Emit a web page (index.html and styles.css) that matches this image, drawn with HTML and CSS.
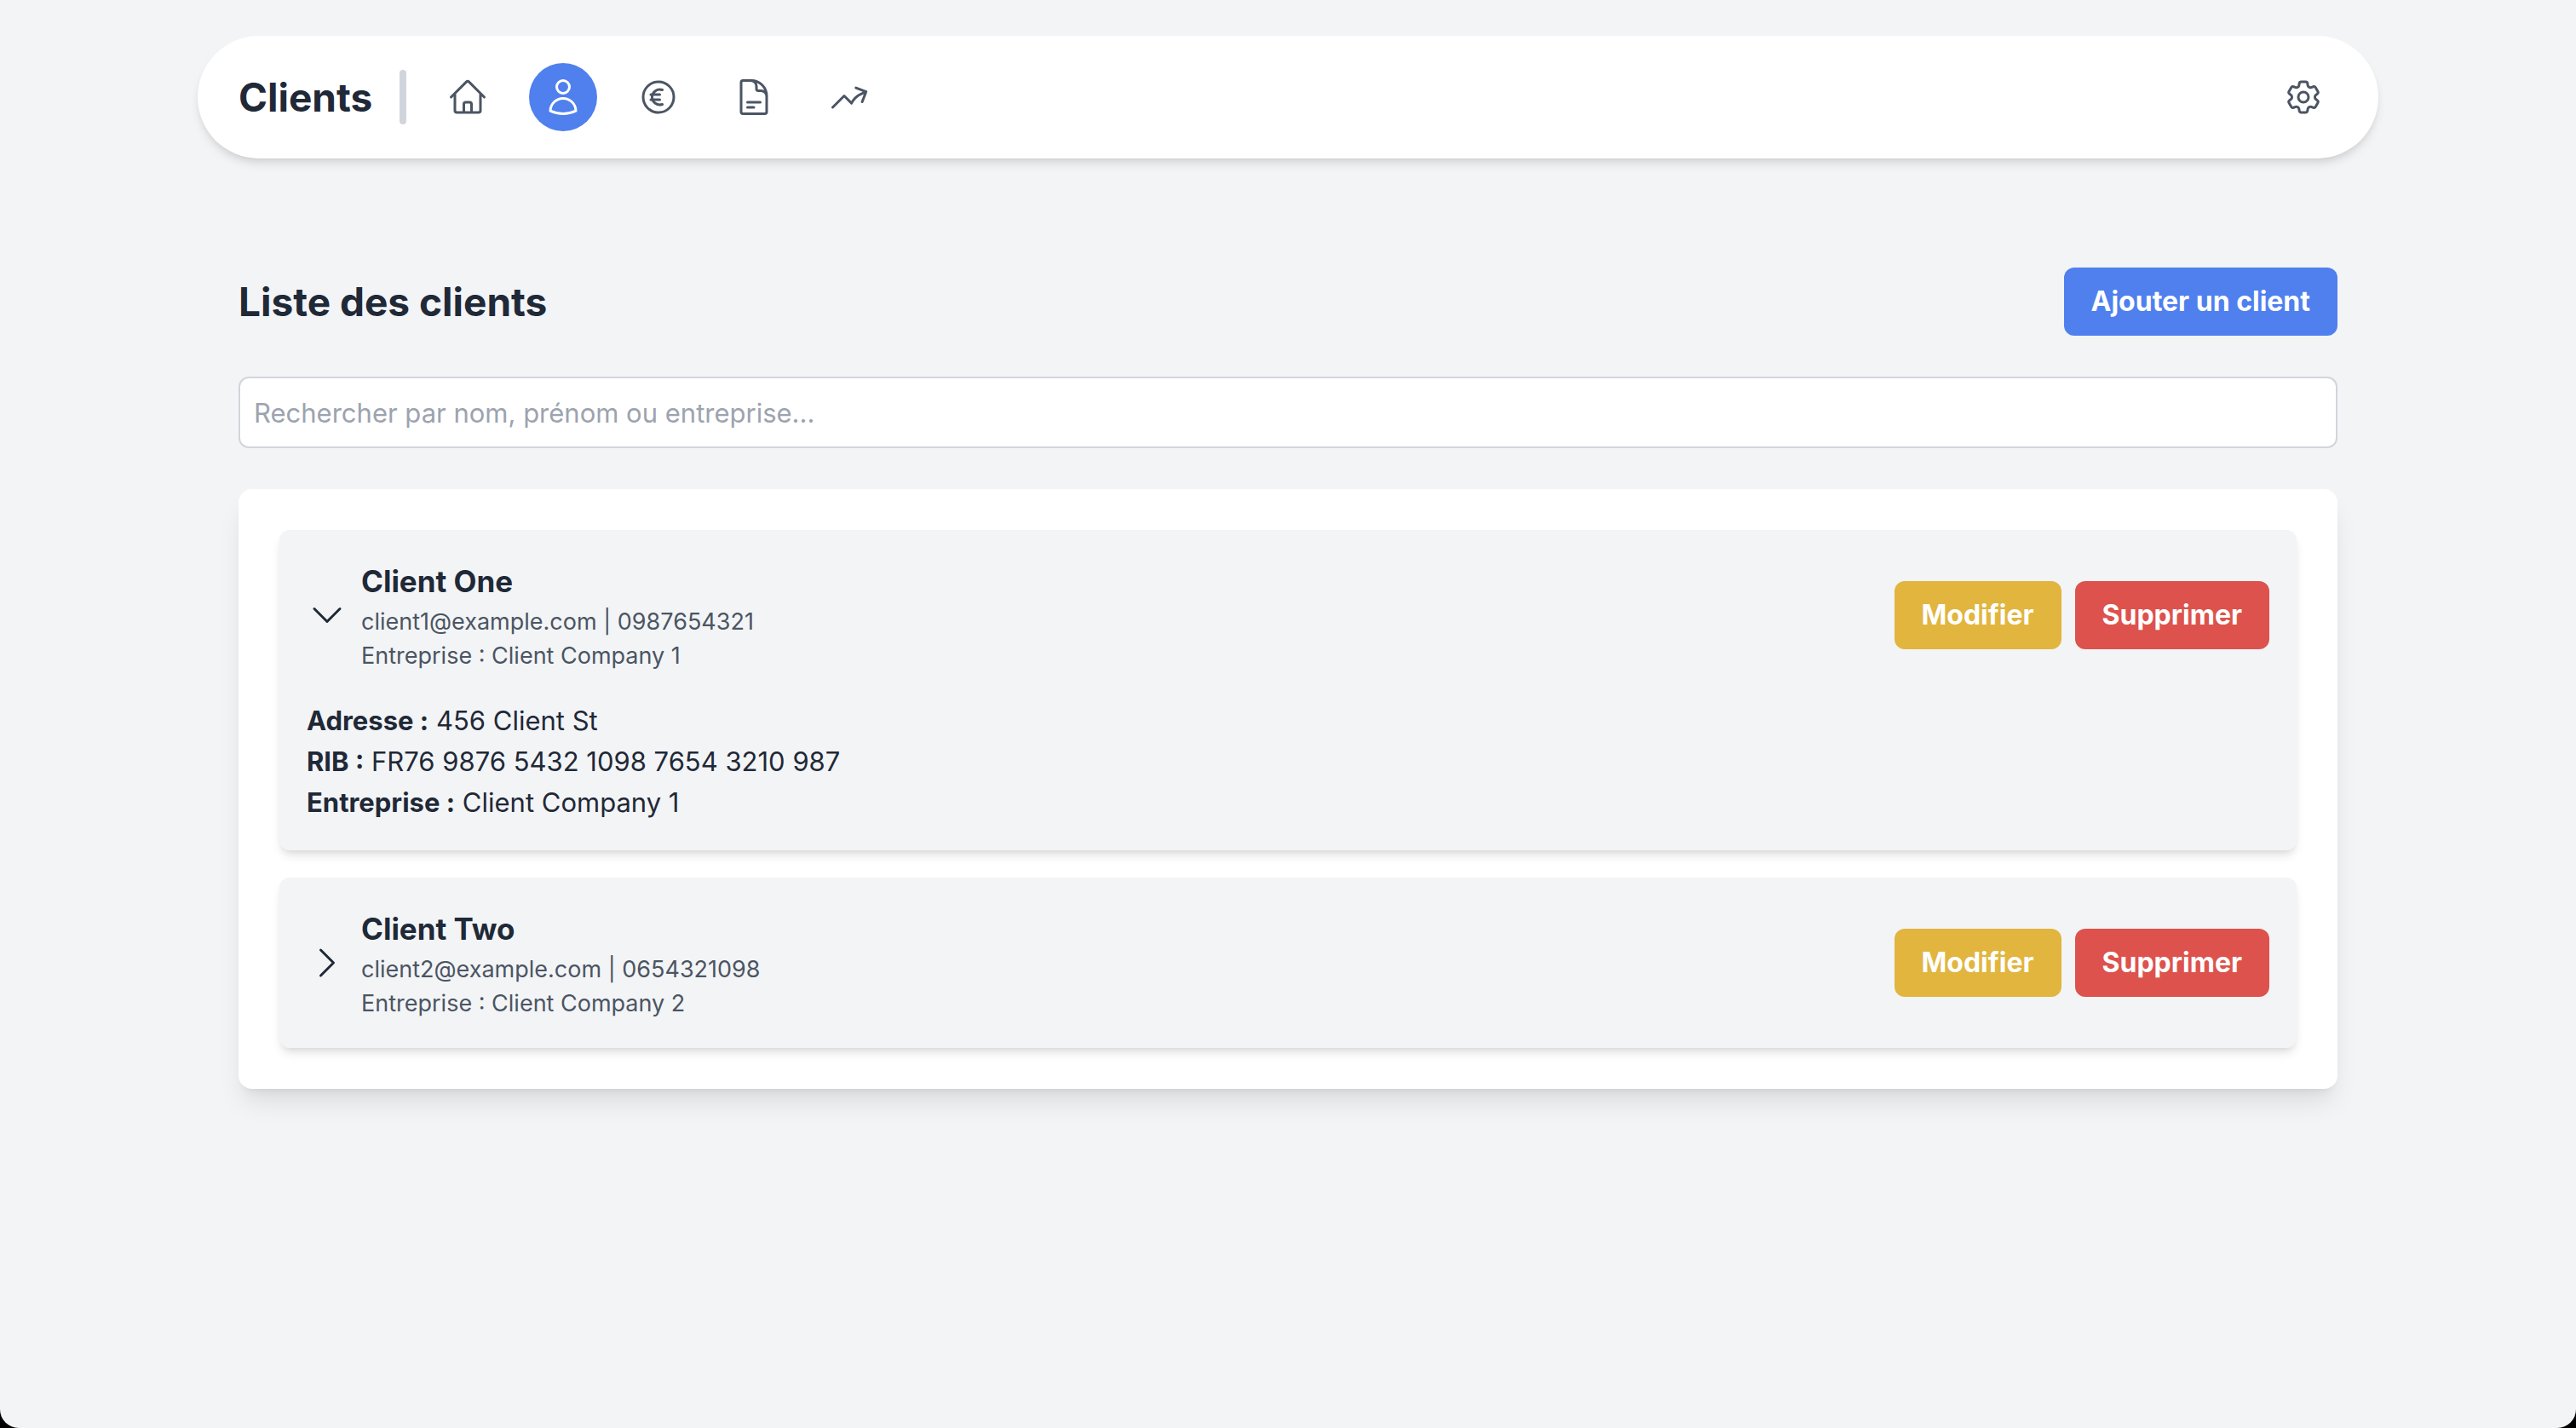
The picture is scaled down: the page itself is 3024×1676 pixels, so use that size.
FILE: index.html
```html
<!DOCTYPE html>
<html lang="fr">
<head>
  <meta charset="utf-8">
  <meta name="viewport" content="width=device-width, initial-scale=1">
  <title>Clients</title>
  <link rel="stylesheet" href="styles.css">
</head>
<body>
  <div class="page">
    <header class="topbar">
      <h1 class="topbar-title">Clients</h1>
      <span class="divider"></span>
      <nav class="nav" aria-label="Navigation principale">
        <a class="nav-link" href="#accueil" aria-label="Accueil">
          <svg class="icon" viewBox="0 0 24 24"><path d="M2.25 12l8.954-8.955c.44-.439 1.152-.439 1.591 0L21.75 12M4.5 9.75v10.125c0 .621.504 1.125 1.125 1.125H9.75v-4.875c0-.621.504-1.125 1.125-1.125h2.25c.621 0 1.125.504 1.125 1.125V21h4.125c.621 0 1.125-.504 1.125-1.125V9.75M8.25 21h8.25"/></svg>
        </a>
        <a class="nav-link nav-link-active" href="#clients" aria-label="Clients" aria-current="page">
          <svg class="icon" viewBox="0 0 24 24"><path d="M15.75 6a3.75 3.75 0 11-7.5 0 3.75 3.75 0 017.5 0zM4.501 20.118a7.5 7.5 0 0114.998 0A17.933 17.933 0 0112 21.75c-2.676 0-5.216-.584-7.499-1.632z"/></svg>
        </a>
        <a class="nav-link" href="#paiements" aria-label="Paiements">
          <svg class="icon" viewBox="0 0 24 24"><path d="M14.25 7.756a4.5 4.5 0 100 8.488M7.5 10.5h5.25m-5.25 3h5.25M21 12a9 9 0 11-18 0 9 9 0 0118 0z"/></svg>
        </a>
        <a class="nav-link" href="#documents" aria-label="Documents">
          <svg class="icon" viewBox="0 0 24 24"><path d="M19.5 14.25v-2.625a3.375 3.375 0 00-3.375-3.375h-1.5A1.125 1.125 0 0113.5 7.125v-1.5a3.375 3.375 0 00-3.375-3.375H8.25m0 12.75h7.5m-7.5 3H12M10.5 2.25H5.625c-.621 0-1.125.504-1.125 1.125v17.25c0 .621.504 1.125 1.125 1.125h12.75c.621 0 1.125-.504 1.125-1.125V11.25a9 9 0 00-9-9z"/></svg>
        </a>
        <a class="nav-link" href="#statistiques" aria-label="Statistiques">
          <svg class="icon" viewBox="0 0 24 24"><path d="M2.25 18L9 11.25l4.306 4.306a11.95 11.95 0 015.814-5.518l2.74-1.22m0 0l-5.94-2.281m5.94 2.28l-2.28 5.941"/></svg>
        </a>
      </nav>
      <a class="nav-link" href="#parametres" aria-label="Paramètres">
        <svg class="icon" viewBox="0 0 24 24"><path d="M9.594 3.94c.09-.542.56-.94 1.11-.94h2.593c.55 0 1.02.398 1.11.94l.213 1.281c.063.374.313.686.645.87.074.04.147.083.22.127.324.196.72.257 1.075.124l1.217-.456a1.125 1.125 0 011.37.49l1.296 2.247a1.125 1.125 0 01-.26 1.431l-1.003.827c-.293.24-.438.613-.431.992a6.759 6.759 0 010 .255c-.007.378.138.75.43.99l1.005.828c.424.35.534.954.26 1.43l-1.298 2.247a1.125 1.125 0 01-1.369.491l-1.217-.456c-.355-.133-.75-.072-1.076.124a6.57 6.57 0 01-.22.128c-.331.183-.581.495-.644.869l-.213 1.28c-.09.543-.56.941-1.11.941h-2.594c-.55 0-1.02-.398-1.11-.94l-.213-1.281c-.062-.374-.312-.686-.644-.87a6.52 6.52 0 01-.22-.127c-.325-.196-.72-.257-1.076-.124l-1.217.456a1.125 1.125 0 01-1.369-.49l-1.297-2.247a1.125 1.125 0 01.26-1.431l1.004-.827c.292-.24.437-.613.43-.992a6.932 6.932 0 010-.255c.007-.378-.138-.75-.43-.99l-1.004-.828a1.125 1.125 0 01-.26-1.43l1.297-2.247a1.125 1.125 0 011.37-.491l1.216.456c.356.133.751.072 1.076-.124.072-.044.146-.087.22-.128.332-.183.582-.495.644-.869l.214-1.281z"/><path d="M15 12a3 3 0 11-6 0 3 3 0 016 0z"/></svg>
      </a>
    </header>

    <main class="content">
      <div class="content-head">
        <h2 class="content-title">Liste des clients</h2>
        <button class="btn btn-primary" type="button">Ajouter un client</button>
      </div>

      <input class="search" type="search" aria-label="Rechercher un client" placeholder="Rechercher par nom, prénom ou entreprise...">

      <ul class="client-list">
        <li class="client">
          <div class="client-row">
            <button class="toggle" type="button" aria-expanded="true" aria-label="Masquer les détails de Client One">
              <svg class="icon" viewBox="0 0 24 24"><path d="M19.5 8.25l-7.5 7.5-7.5-7.5"/></svg>
            </button>
            <div class="client-info">
              <h3 class="client-name">Client One</h3>
              <p class="client-meta">client1@example.com | 0987654321</p>
              <p class="client-meta">Entreprise : Client Company 1</p>
            </div>
            <div class="client-actions">
              <button class="btn btn-edit" type="button">Modifier</button>
              <button class="btn btn-delete" type="button">Supprimer</button>
            </div>
          </div>
          <div class="client-details">
            <p><strong>Adresse :</strong> 456 Client St</p>
            <p><strong>RIB :</strong> FR76 9876 5432 1098 7654 3210 987</p>
            <p><strong>Entreprise :</strong> Client Company 1</p>
          </div>
        </li>
        <li class="client">
          <div class="client-row">
            <button class="toggle" type="button" aria-expanded="false" aria-label="Afficher les détails de Client Two">
              <svg class="icon" viewBox="0 0 24 24"><path d="M8.25 4.5l7.5 7.5-7.5 7.5"/></svg>
            </button>
            <div class="client-info">
              <h3 class="client-name">Client Two</h3>
              <p class="client-meta">client2@example.com | 0654321098</p>
              <p class="client-meta">Entreprise : Client Company 2</p>
            </div>
            <div class="client-actions">
              <button class="btn btn-edit" type="button">Modifier</button>
              <button class="btn btn-delete" type="button">Supprimer</button>
            </div>
          </div>
        </li>
      </ul>
    </main>
  </div>
</body>
</html>
```
FILE: styles.css
```css
*,
*::before,
*::after {
  box-sizing: border-box;
}

body {
  margin: 0;
  background: #000;
  color: #1f2937;
  font-family: Inter, "Liberation Sans", sans-serif;
  font-size: 31px;
  line-height: 48px;
}

h1,
h2,
h3,
p,
ul {
  margin: 0;
  padding: 0;
}

button,
input {
  font: inherit;
  color: inherit;
}

.page {
  min-height: 100vh;
  padding: 42px 64px;
  background: #f3f4f6;
  border-radius: 0 0 22px 22px;
}

.icon {
  display: block;
  width: 48px;
  height: 48px;
  fill: none;
  stroke: currentColor;
  stroke-width: 1.5;
  stroke-linecap: round;
  stroke-linejoin: round;
}

/* Top bar */

.topbar {
  display: flex;
  align-items: center;
  gap: 32px;
  max-width: 2560px;
  margin: 0 auto;
  padding: 32px 48px;
  background: #fff;
  border-radius: 72px;
  box-shadow: 0 8px 12px -2px rgba(0, 0, 0, 0.1), 0 4px 8px -4px rgba(0, 0, 0, 0.1);
}

.topbar-title,
.content-title {
  font-size: 46px;
  font-weight: 700;
  line-height: 64px;
}

.divider {
  width: 8px;
  height: 64px;
  background: #d1d5db;
  border-radius: 4px;
}

.nav {
  display: flex;
  flex: 1;
  gap: 32px;
}

.nav-link {
  padding: 16px;
  border-radius: 50%;
  color: #4b5563;
}

.nav-link-active {
  background: #4f80ee;
  color: #fff;
}

/* Content */

.content {
  display: flex;
  flex-direction: column;
  gap: 48px;
  max-width: 2560px;
  margin: 0 auto;
  padding: 128px 48px 48px;
}

.content-head {
  display: flex;
  align-items: center;
  justify-content: space-between;
}

.btn {
  padding: 16px 32px;
  border: 0;
  border-radius: 12px;
  color: #fff;
  font-size: 32px;
  font-weight: 700;
  cursor: pointer;
}

.btn-primary {
  background: #4f80ee;
}

.btn-edit {
  background: #e1b53e;
}

.btn-delete {
  background: #dd524c;
}

.search {
  width: 100%;
  height: 84px;
  padding: 16px;
  border: 2px solid #d1d5db;
  border-radius: 12px;
  background: #fff;
  appearance: none;
}

.search::placeholder {
  color: #9ca3af;
}

/* Client list */

.client-list {
  display: flex;
  flex-direction: column;
  gap: 32px;
  padding: 48px;
  list-style: none;
  background: #fff;
  border-radius: 16px;
  box-shadow: 0 20px 30px -6px rgba(0, 0, 0, 0.1), 0 8px 12px -8px rgba(0, 0, 0, 0.1);
}

.client {
  display: flex;
  flex-direction: column;
  gap: 32px;
  padding: 32px;
  background: #f3f4f6;
  border-radius: 12px;
  box-shadow: 0 8px 12px -2px rgba(0, 0, 0, 0.1), 0 4px 8px -4px rgba(0, 0, 0, 0.1);
}

.client-row {
  display: flex;
  align-items: center;
  gap: 16px;
}

.toggle {
  padding: 0;
  border: 0;
  background: none;
  cursor: pointer;
}

.client-info {
  flex: 1;
}

.client-name {
  font-size: 35px;
  font-weight: 700;
  line-height: 56px;
}

.client-meta {
  color: #4b5563;
  font-size: 27px;
  line-height: 40px;
}

.client-actions {
  display: flex;
  gap: 16px;
}
```
